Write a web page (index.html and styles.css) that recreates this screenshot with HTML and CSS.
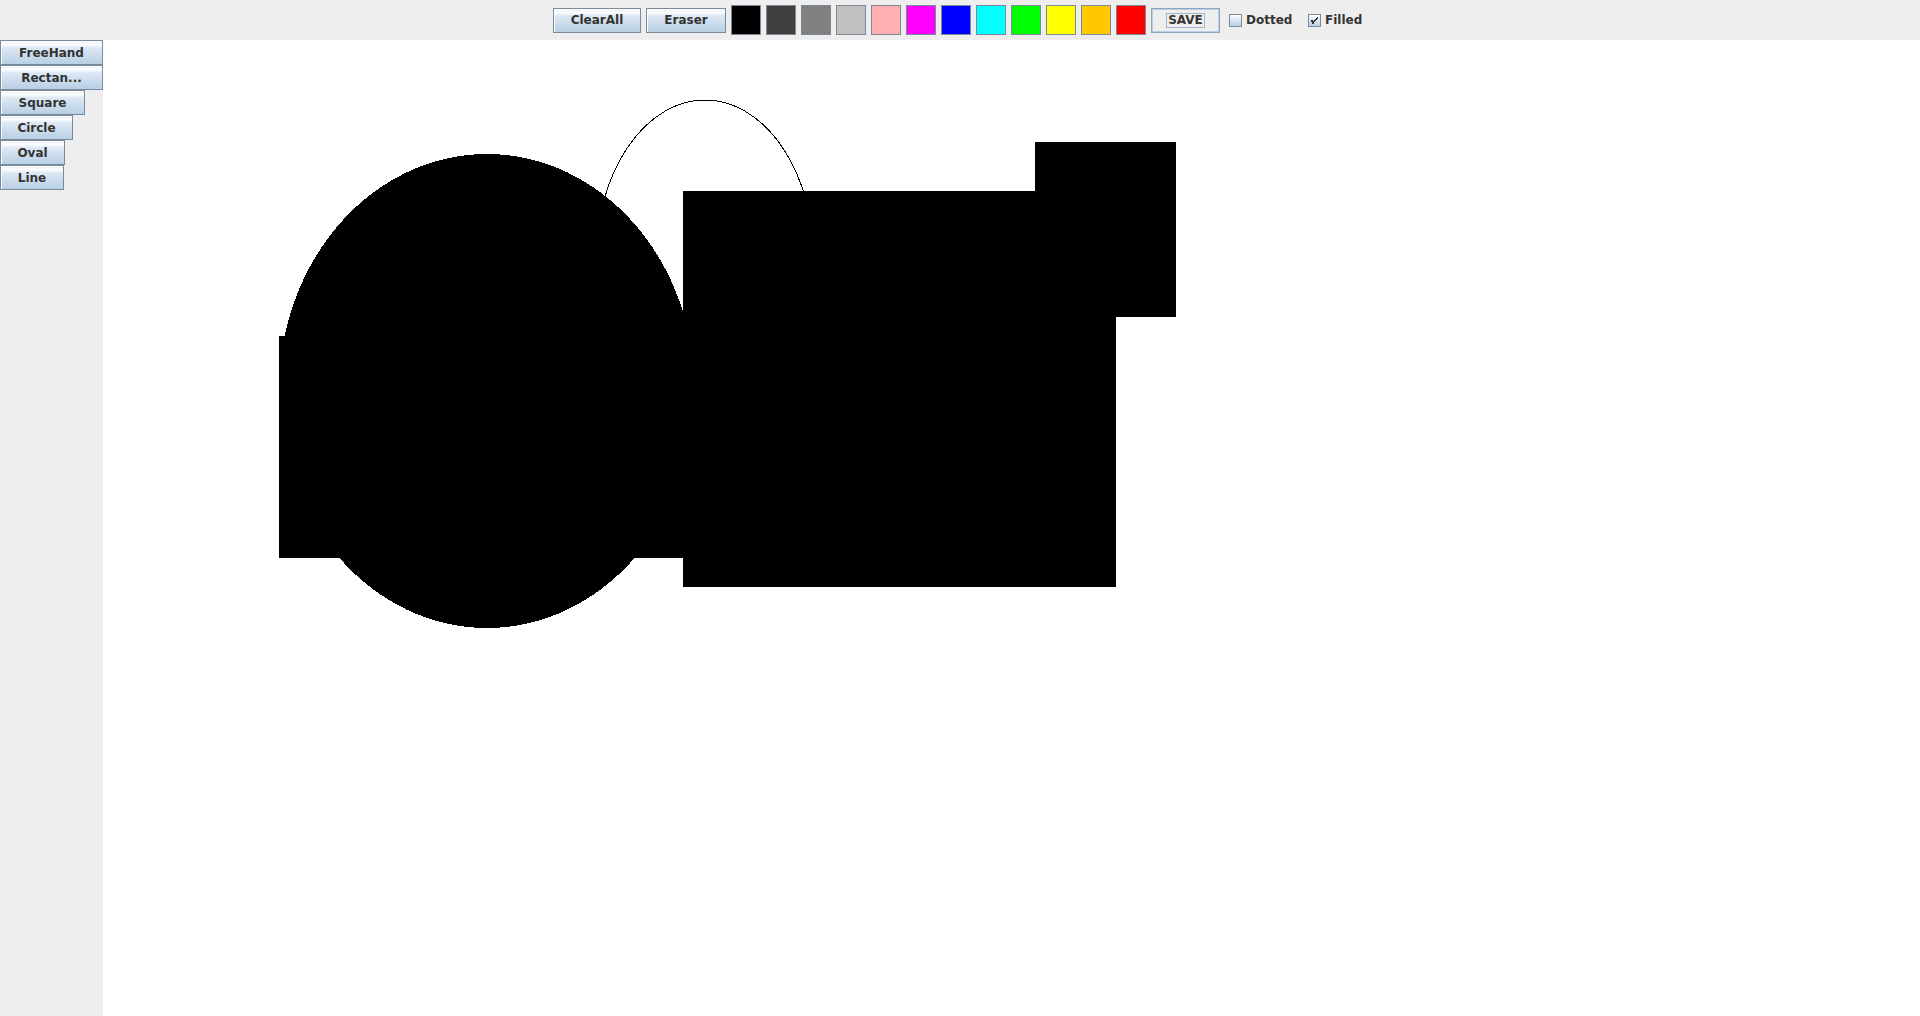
FILE: index.html
```html
<!DOCTYPE html>
<html>
<head>
<meta charset="utf-8">
<title>Paint</title>
<link rel="stylesheet" href="styles.css">
</head>
<body>
<div class="app">
  <div class="toolbar">
    <button class="btn btn-clear">ClearAll</button>
    <button class="btn btn-eraser">Eraser</button>
    <span class="swatch sw-black"></span>
    <span class="swatch sw-darkgray"></span>
    <span class="swatch sw-gray"></span>
    <span class="swatch sw-lightgray"></span>
    <span class="swatch sw-pink"></span>
    <span class="swatch sw-magenta"></span>
    <span class="swatch sw-blue"></span>
    <span class="swatch sw-cyan"></span>
    <span class="swatch sw-green"></span>
    <span class="swatch sw-yellow"></span>
    <span class="swatch sw-orange"></span>
    <span class="swatch sw-red"></span>
    <button class="btn-save"><span class="focus-rect">SAVE</span></button>
    <label class="check check-dotted"><span class="box"></span><span class="check-text">Dotted</span></label>
    <label class="check check-filled"><span class="box"><svg class="tick" width="13" height="13" viewBox="0 0 13 13"><path d="M3 6.5 L5 8.5 L5 9.5 M4 6.5 L5.5 8 M5 9 L10 4 M5 8 L9.5 3.5" stroke="#333" stroke-width="1.2" fill="none" shape-rendering="crispEdges"/></svg></span><span class="check-text">Filled</span></label>
  </div>
  <div class="main">
    <div class="sidebar">
      <button class="btn side w-freehand">FreeHand</button>
      <button class="btn side w-rect">Rectan...</button>
      <button class="btn side w-square">Square</button>
      <button class="btn side w-circle">Circle</button>
      <button class="btn side w-oval">Oval</button>
      <button class="btn side w-line">Line</button>
    </div>
    <div class="canvas">
      <svg class="drawing" width="1817" height="976" viewBox="0 0 1817 976">
        <ellipse cx="602" cy="220" rx="109" ry="160" fill="none" stroke="#000" stroke-width="1" shape-rendering="crispEdges"/>
        <ellipse cx="384" cy="351" rx="208" ry="237" fill="#000" shape-rendering="crispEdges"/>
        <rect x="176" y="296" width="404" height="222" fill="#000" shape-rendering="crispEdges"/>
        <rect x="580" y="151" width="433" height="396" fill="#000" shape-rendering="crispEdges"/>
        <rect x="932" y="102" width="141" height="175" fill="#000" shape-rendering="crispEdges"/>
      </svg>
    </div>
  </div>
</div>
</body>
</html>
```
FILE: styles.css
```css
html, body {
  margin: 0;
  padding: 0;
  background: #eeeeee;
  font-family: "DejaVu Sans", "Liberation Sans", sans-serif;
  font-size: 12px;
  font-weight: bold;
  color: #333333;
  overflow: hidden;
}

.app {
  display: flex;
  flex-direction: column;
  width: 1920px;
  height: 1016px;
}

.toolbar {
  height: 40px;
  flex: 0 0 40px;
  display: flex;
  justify-content: center;
  align-items: center;
  gap: 5px;
  background: #eeeeee;
}

.btn {
  box-sizing: border-box;
  height: 25px;
  padding: 0;
  margin: 0;
  border: 1px solid #7a8a99;
  border-radius: 0;
  background: linear-gradient(to bottom, #dde8f3 0%, #ffffff 14%, #dde8f3 30%, #b8cfe5 100%);
  box-shadow: inset 1px 1px 0 #ffffff;
  font-family: "DejaVu Sans", "Liberation Sans", sans-serif;
  font-size: 12px;
  font-weight: bold;
  color: #333333;
  text-align: center;
  line-height: 22px;
  white-space: nowrap;
}

.btn-clear { width: 88px; }
.btn-eraser { width: 80px; }

.swatch {
  box-sizing: border-box;
  width: 30px;
  height: 30px;
  border: 1px solid #7a8a99;
  display: block;
}
.sw-black { background: #000000; }
.sw-darkgray { background: #404040; }
.sw-gray { background: #808080; }
.sw-lightgray { background: #c0c0c0; }
.sw-pink { background: #ffafaf; }
.sw-magenta { background: #ff00ff; }
.sw-blue { background: #0000ff; }
.sw-cyan { background: #00ffff; }
.sw-green { background: #00ff00; }
.sw-yellow { background: #ffff00; }
.sw-orange { background: #ffc800; }
.sw-red { background: #ff0000; }

.btn-save {
  box-sizing: border-box;
  width: 69px;
  height: 25px;
  margin: 0;
  padding: 0;
  border: 1px solid #8fa6bf;
  box-shadow: inset 0 0 0 1px #b8cfe5;
  background: #eeeeee;
  border-radius: 0;
  display: flex;
  align-items: center;
  justify-content: center;
  font-family: "DejaVu Sans", "Liberation Sans", sans-serif;
  font-size: 12px;
  font-weight: bold;
  color: #333333;
}

.focus-rect {
  border: 1px solid #a3b8cc;
  padding: 0 1px;
  line-height: 13px;
}

.check {
  box-sizing: border-box;
  height: 25px;
  display: flex;
  align-items: center;
  padding: 0 4px;
  gap: 4px;
}
.check-dotted { width: 74px; }
.check-filled { width: 63px; }

.box {
  box-sizing: border-box;
  width: 13px;
  height: 13px;
  flex: 0 0 13px;
  border: 1px solid #7a8a99;
  background: linear-gradient(to bottom, #ffffff 0%, #dde8f3 40%, #b8cfe5 100%);
  position: relative;
}

.tick {
  position: absolute;
  left: -1px;
  top: -1px;
}

.check-text {
  white-space: nowrap;
}

.main {
  flex: 1 1 auto;
  display: flex;
  min-height: 0;
}

.sidebar {
  width: 103px;
  flex: 0 0 103px;
  display: flex;
  flex-direction: column;
  align-items: flex-start;
  background: #eeeeee;
}

.side { display: block; }
.w-freehand { width: 103px; }
.w-rect { width: 103px; }
.w-square { width: 85px; }
.w-circle { width: 73px; }
.w-oval { width: 65px; }
.w-line { width: 64px; }

.canvas {
  flex: 1 1 auto;
  background: #ffffff;
  overflow: hidden;
}

.drawing {
  display: block;
}
```
